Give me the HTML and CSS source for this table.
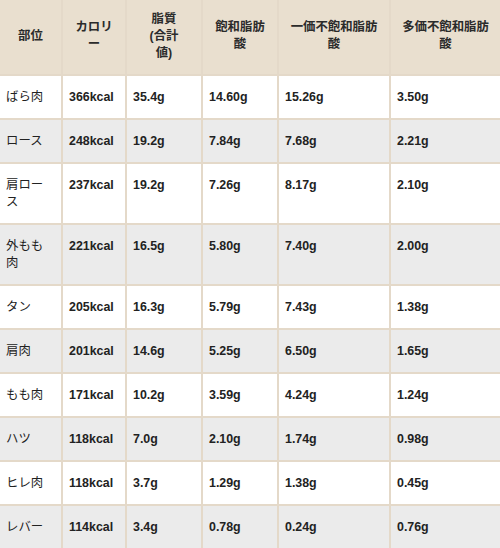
FILE: index.html
```html
<!DOCTYPE html>
<html lang="ja">
<head>
<meta charset="utf-8">
<title>部位別 脂質</title>
<link rel="stylesheet" href="styles.css">
</head>
<body>
<table class="fat-table">
  <colgroup>
    <col class="c1"><col class="c2"><col class="c3"><col class="c4"><col class="c5"><col class="c6">
  </colgroup>
  <thead>
    <tr>
      <th>部位</th>
      <th>カロリ<br>ー</th>
      <th>脂質<br>(合計<br>値)</th>
      <th>飽和脂肪<br>酸</th>
      <th>一価不飽和脂肪<br>酸</th>
      <th>多価不飽和脂肪<br>酸</th>
    </tr>
  </thead>
  <tbody>
    <tr><td>ばら肉</td><td>366kcal</td><td>35.4g</td><td>14.60g</td><td>15.26g</td><td>3.50g</td></tr>
    <tr><td>ロース</td><td>248kcal</td><td>19.2g</td><td>7.84g</td><td>7.68g</td><td>2.21g</td></tr>
    <tr><td>肩ロー<br>ス</td><td>237kcal</td><td>19.2g</td><td>7.26g</td><td>8.17g</td><td>2.10g</td></tr>
    <tr><td>外もも<br>肉</td><td>221kcal</td><td>16.5g</td><td>5.80g</td><td>7.40g</td><td>2.00g</td></tr>
    <tr><td>タン</td><td>205kcal</td><td>16.3g</td><td>5.79g</td><td>7.43g</td><td>1.38g</td></tr>
    <tr><td>肩肉</td><td>201kcal</td><td>14.6g</td><td>5.25g</td><td>6.50g</td><td>1.65g</td></tr>
    <tr><td>もも肉</td><td>171kcal</td><td>10.2g</td><td>3.59g</td><td>4.24g</td><td>1.24g</td></tr>
    <tr><td>ハツ</td><td>118kcal</td><td>7.0g</td><td>2.10g</td><td>1.74g</td><td>0.98g</td></tr>
    <tr><td>ヒレ肉</td><td>118kcal</td><td>3.7g</td><td>1.29g</td><td>1.38g</td><td>0.45g</td></tr>
    <tr><td>レバー</td><td>114kcal</td><td>3.4g</td><td>0.78g</td><td>0.24g</td><td>0.76g</td></tr>
  </tbody>
</table>
</body>
</html>
```

FILE: styles.css
```css
html, body {
  margin: 0;
  padding: 0;
  background: #ffffff;
}

.fat-table {
  width: 500px;
  table-layout: fixed;
  border-collapse: collapse;
  font-family: "Liberation Sans", Arial, "Noto Sans CJK JP", sans-serif;
  font-size: 12.4px;
  line-height: 17px;
  color: #222222;
}

.c1 { width: 62px; }
.c2 { width: 64px; }
.c3 { width: 76px; }
.c4 { width: 76px; }
.c5 { width: 112px; }
.c6 { width: 110px; }

.fat-table th,
.fat-table td {
  border: 2px solid #e4d9c9;
  white-space: nowrap;
  overflow: hidden;
}

.fat-table th {
  background: #e9dfcf;
  color: #2b2b2b;
  font-weight: bold;
  text-align: center;
  vertical-align: middle;
  padding: 10.5px 6px 12.5px;
}

.fat-table thead tr th {
  border-top: 0;
}

.fat-table td {
  text-align: left;
  vertical-align: top;
  padding: 12.5px 6px;
  font-weight: bold;
}

.fat-table td:first-child {
  font-weight: normal;
}

.fat-table th:first-child,
.fat-table td:first-child {
  border-left: 0;
}

.fat-table th:last-child,
.fat-table td:last-child {
  border-right: 0;
}

.fat-table tbody tr:nth-child(even) td {
  background: #ebebeb;
}
```
